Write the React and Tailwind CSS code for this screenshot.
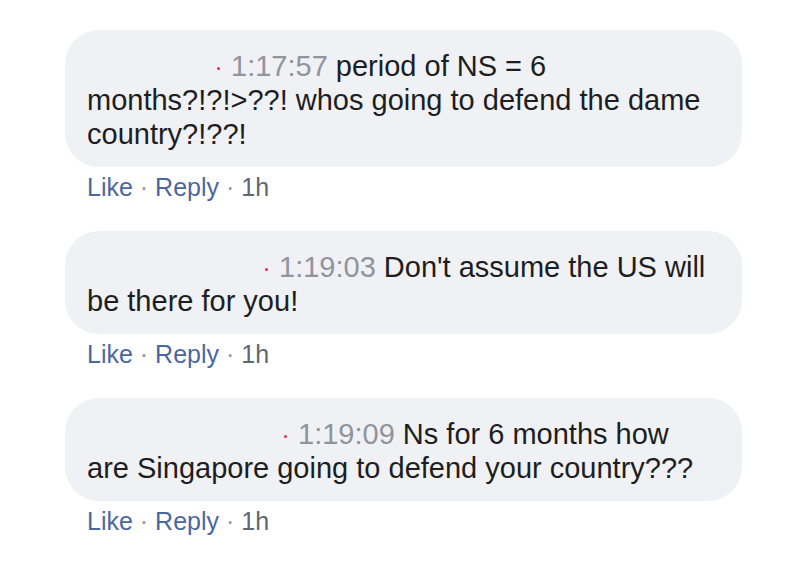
import React from 'react';

const comments = [
    { indent: 130, time: '1:17:57', lines: ['period of NS = 6', 'months?!?!>??! whos going to defend the dame', 'country?!??!'] },
    { indent: 178, time: '1:19:03', lines: ["Don't assume the US will", 'be there for you!'] },
    { indent: 197, time: '1:19:09', lines: ['Ns for 6 months how', 'are Singapore going to defend your country???'] },
];

function Comment({ c }) {
    return (
        <div>
            <div className="w-[677px] rounded-[34px] bg-[#f0f1f4] pl-[22px] pr-6 pt-[19px] pb-[16px] text-[29px] leading-[34px] text-[#1c1e21]">
                {c.lines.map((line, i) => (
                    <div key={i} className="whitespace-nowrap h-[34px]">
                        {i === 0 && (
                            <>
                                <span className="inline-block" style={{ width: c.indent }} />
                                <span className="inline-block w-[3px] h-[3px] rounded-full bg-[#f02849] align-middle mr-[11px]" />
                                <span className="text-[#90949c]">{c.time}</span>{' '}
                            </>
                        )}
                        {line}
                    </div>
                ))}
            </div>
            <div className="pl-[22px] pt-[6px] text-[25px] leading-[28px] whitespace-nowrap">
                <span className="text-[#4b67a1]">Like</span>
                <span className="text-[#90949c]"> · </span>
                <span className="text-[#4b67a1]">Reply</span>
                <span className="text-[#90949c]"> · </span>
                <span className="text-[#606770]">1h</span>
            </div>
        </div>
    );
}

export default function App() {
    return (
        <div className="w-[800px] h-[567px] bg-white pt-[30px] pl-[65px] flex flex-col gap-[30px] overflow-hidden" style={{ fontFamily: '"Liberation Sans", Arial, sans-serif' }}>
            {comments.map((c) => (
                <Comment key={c.time} c={c} />
            ))}
        </div>
    );
}
